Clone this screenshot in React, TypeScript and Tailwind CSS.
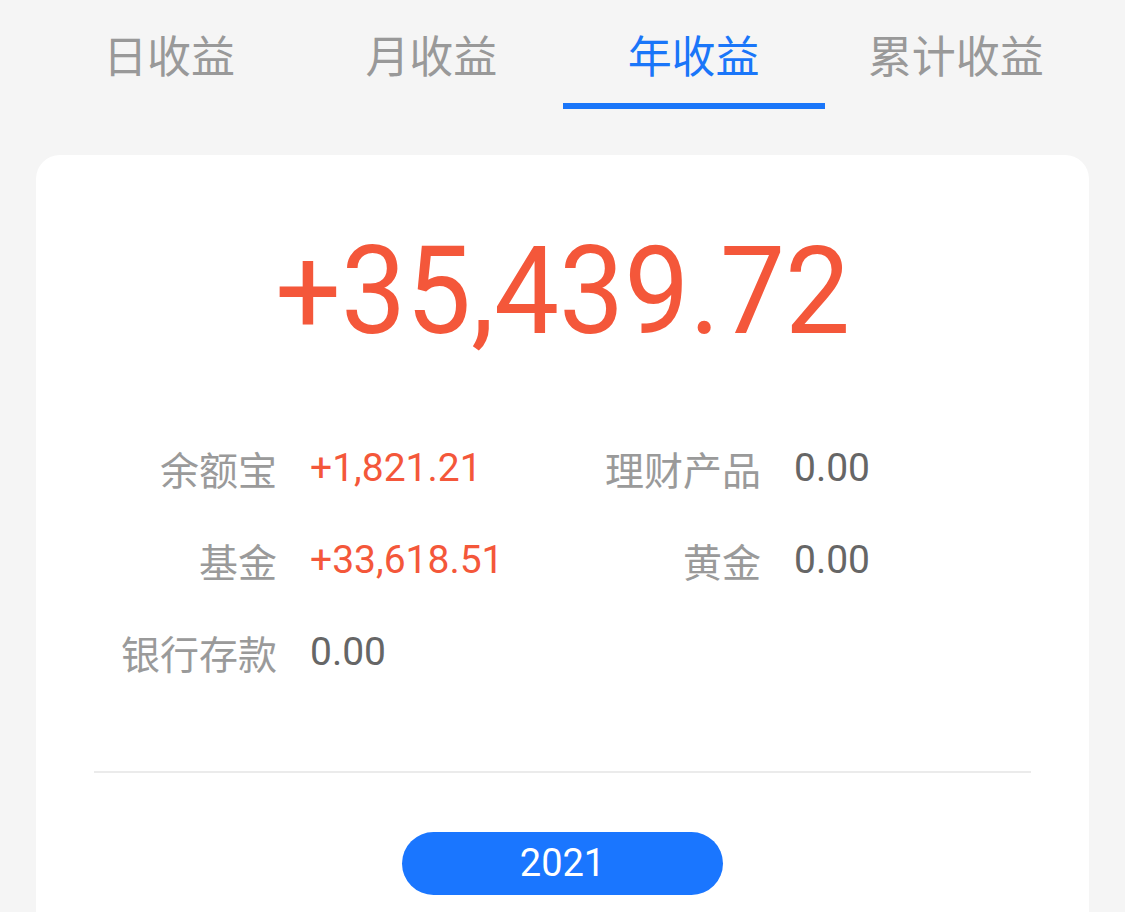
import { useState } from "react"

const TABS = ["日收益", "月收益", "年收益", "累计收益"]

// 收益明细：label / value / 是否为正收益
const ITEMS = [
  { label: "余额宝", value: "+1,821.21", up: true },
  { label: "理财产品", value: "0.00", up: false },
  { label: "基金", value: "+33,618.51", up: true },
  { label: "黄金", value: "0.00", up: false },
  { label: "银行存款", value: "0.00", up: false },
]

const cjk = "font-['Noto_Sans_CJK_SC','Noto_Sans',sans-serif]"
const num = "font-['Roboto','Noto_Sans_CJK_SC',sans-serif]"

export default function App() {
  const [active, setActive] = useState(2)

  return (
    <div className={`min-h-[912px] h-[912px] overflow-hidden bg-[#f5f5f5] ${cjk}`}>
      {/* 顶部切换 */}
      <div className="flex px-[38px] pt-[24px]">
        {TABS.map((tab, i) => (
          <button
            key={tab}
            onClick={() => setActive(i)}
            className="flex-1 flex flex-col items-center"
          >
            <span
              className={`text-[44px] leading-[60px] ${
                i === active ? "text-[#1a76f9]" : "text-[#999999]"
              }`}
            >
              {tab}
            </span>
            <span
              className={`mt-[19px] h-[6px] w-full ${
                i === active ? "bg-[#1a76f9]" : "bg-transparent"
              }`}
            />
          </button>
        ))}
      </div>

      {/* 收益卡片 */}
      <div className="mx-[36px] mt-[46px] rounded-[24px] bg-white pt-[76px] pb-[60px]">
        <div className="flex justify-center">
          <span
            className={`${num} inline-block scale-x-[0.95] text-[122px] leading-[122px] text-[#f4573a]`}
          >
            +35,439.72
          </span>
        </div>

        <div className="mt-[69px] ml-[81px] grid grid-cols-[484px_484px]">
          {ITEMS.map((item) => (
            <div key={item.label} className="flex items-center h-[92px]">
              <span className="w-[160px] text-right text-[39px] text-[#9a9a9a]">
                {item.label}
              </span>
              <span
                className={`${num} ml-[33px] text-[39px] ${
                  item.up ? "text-[#f4573a]" : "text-[#666666]"
                }`}
              >
                {item.value}
              </span>
            </div>
          ))}
        </div>

        <div className="mx-[58px] mt-[73px] h-[2px] bg-[#ebebeb]" />

        <div className="mt-[59px] flex justify-center">
          <div
            className={`${num} flex h-[63px] w-[321px] items-center justify-center rounded-full bg-[#1a76ff] text-[38px] text-white`}
          >
            2021
          </div>
        </div>
      </div>
    </div>
  )
}
